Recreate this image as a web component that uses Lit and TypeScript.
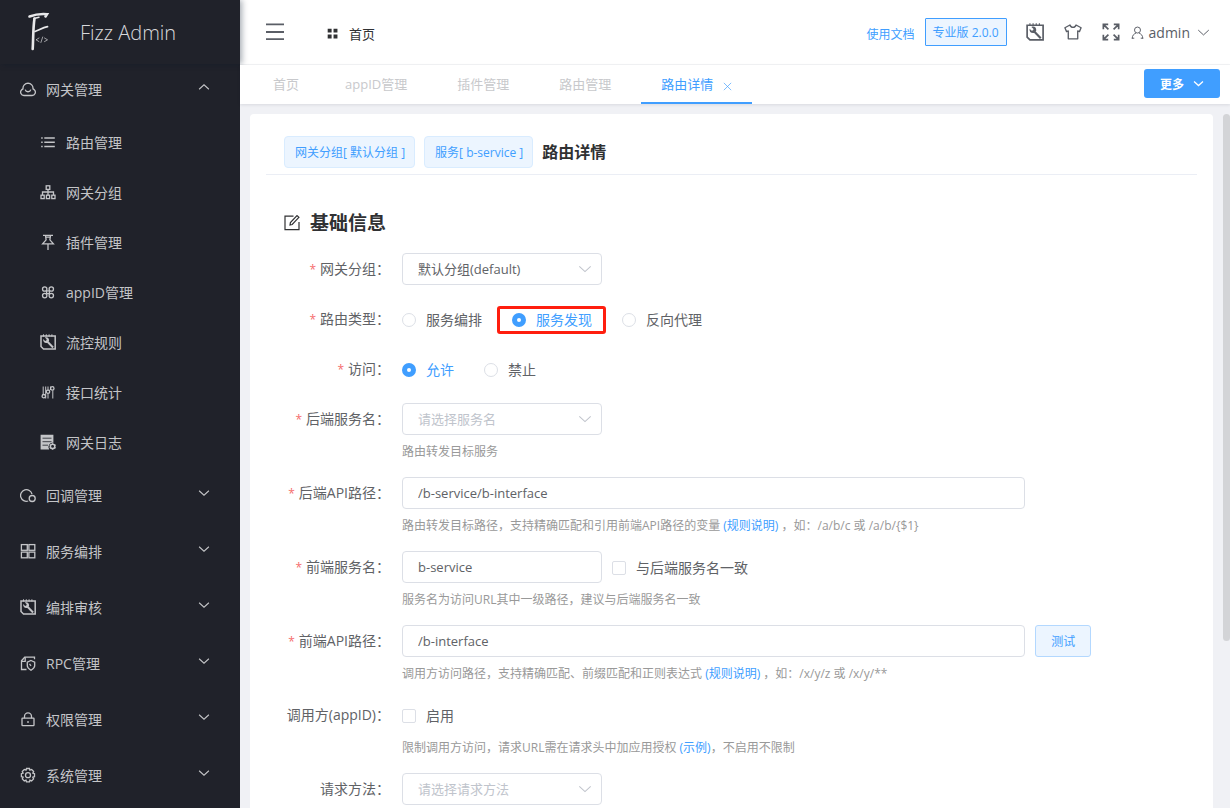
import { LitElement, html, css, svg, nothing, type SVGTemplateResult, type TemplateResult } from "lit";
import { customElement, property, state } from "lit/decorators.js";
import { classMap } from "lit/directives/class-map.js";

const ICONS: Record<string, SVGTemplateResult> = {
  wrench: svg`
    <path d="M1 2h14.200v13h-11.700l-2.500-2.500z" stroke-width="1.500"/>
    <path d="M3.500 .3v2.200M6.300 .3v2.200M9.100 .3v2.200M11.900 .3v2.200" stroke-width="1"/>
    <path d="M7.300 7.500l5.800 6" stroke-width="1.900"/>
    <path d="M4.800 3.500l1.900 1.800-.4 1.200-1.200.4-1.900-1.900c-.4 2.400 1.200 4.400 3.900 3.900l2-2.100c.3-2.700-1.800-4.300-4.300-3.300z" fill="currentColor" stroke="none"/>`,
  cloud: svg`
    <path d="M3.900 14.500h8.200a3.300 3.300 0 0 0 2.400-5.500 4 4 0 0 0-1.500-1.200A5.100 5.100 0 0 0 8 2.200a5.100 5.100 0 0 0-5 5.600 4 4 0 0 0-1.500 1.200 3.300 3.300 0 0 0 2.400 5.500z"/>
    <path d="M5.200 8.600a2.900 2.900 0 0 0 5.600 0"/>`,
  list: svg`
    <path d="M4.300 4h10.500M4.300 8.200h10.500M4.300 12.400h10.500" stroke-width="1.500"/>
    <path d="M1.200 4h1.500M1.200 8.200h1.500M1.200 12.400h1.500" stroke-width="1.500"/>`,
  tree: svg`
    <rect x="6.200" y="1.800" width="3.600" height="3.600"/>
    <path d="M8 5.500v5.500M2.500 11v-3h11v3"/>
    <rect x="1" y="11.200" width="3.200" height="3.400"/><rect x="6.400" y="11.200" width="3.200" height="3.400"/><rect x="11.800" y="11.200" width="3.200" height="3.400"/>`,
  pin: svg`<path d="M3 1.400h10M5.500 1.400l.6 4.500-3.500 4h10.800L9.900 5.900l.6-4.500M8 9.900v6M6 3.200h4"/>`,
  clover: svg`
    <path d="M6.600 6.900h2.800v2.800h-2.800z"/>
    <circle cx="4.700" cy="5" r="2.200"/><circle cx="11.300" cy="5" r="2.200"/>
    <circle cx="4.700" cy="11.600" r="2.200"/><circle cx="11.300" cy="11.600" r="2.200"/>`,
  sliders: svg`
    <path d="M3.200 2.500v7.500M8 2.500v3M8 9.500v5M12.800 6.500v8M5.700 2.500v12M10.500 2.500v3.500" stroke-width="1"/>
    <circle cx="3.800" cy="12.200" r="1.700"/><circle cx="8" cy="7.700" r="1.700"/><circle cx="12.300" cy="4.400" r="1.700"/>`,
  log: svg`
    <path d="M.6 .8h12.800v8a4.200 4.200 0 0 0-4.200 6.600h-8.600z" fill="currentColor" stroke="none"/>
    <path d="M2.500 4.200h9M2.500 7.700h9M2.500 11.200h5.500" stroke="#20222a" stroke-width=".8"/>
    <circle cx="12.600" cy="12.400" r="2.200" stroke-width="1.500"/>
    <path d="M12.600 9.200v1M12.600 14.600v1.200M9.700 10.800l1 .6M14.600 13.500l1 .6M9.700 14.100l1-.6M14.600 11.400l1-.6"/>`,
  circles: svg`
    <path d="M8.200 14A5.800 5.800 0 1 1 12 7.100"/>
    <circle cx="12.200" cy="11.500" r="3"/>`,
  grid: svg`
    <rect x="1.400" y="1.600" width="5.900" height="5.700"/><rect x="8.900" y="1.600" width="5.900" height="5.700"/>
    <rect x="1.400" y="9.100" width="5.900" height="5.700"/><rect x="8.900" y="9.100" width="5.900" height="5.700"/>`,
  rpc: svg`
    <path d="M6.500 14.500h-5V5.800L4.700 2.200h9.800v2"/>
    <path d="M1.500 6.300h3.700V2.300"/>
    <path d="M11 5.500l3.700 1.600v3.700c0 1.800-1.700 3.300-3.700 4.500-2-1.200-3.700-2.700-3.700-4.500V7.100z"/>
    <path d="M9.500 8.900l1.500 1.900"/>`,
  lock: svg`
    <rect x="2" y="7.200" width="12" height="7.500" rx=".6"/>
    <path d="M4.500 7.200V5.400a3.500 3.500 0 0 1 7 0V7.200M8 10v2"/>`,
  gear: svg`
    <path d="M6.500 1.500h3l.4 1.700 1.700-.7 2 2-.8 1.600 1.700.6v3l-1.700.5.8 1.700-2 2-1.700-.8-.4 1.800h-3l-.5-1.800-1.700.8-2-2 .8-1.700-1.700-.5v-3l1.700-.6-.8-1.600 2-2 1.700.7z"/>
    <circle cx="8" cy="8.200" r="2.500"/>`,
  shirt: svg`<path d="M5.300 1.800L.8 4.200l1.500 3.500 1.500-.6v7h8.400v-7l1.500.6 1.500-3.500-4.500-2.400a2.800 2.800 0 0 1-5.400 0z" stroke-linejoin="round"/>`,
  expand: svg`<path d="M1.200 5.500V1.200h4.300M1.200 1.200l4.500 4.500M10.500 1.200h4.300v4.300M14.800 1.200l-4.500 4.500M1.200 10.500v4.300h4.300M1.200 14.800l4.500-4.500M14.800 10.500v4.300h-4.300M14.800 14.800l-4.500-4.500" stroke-width="1.500"/>`,
  user: svg`
    <circle cx="8" cy="5" r="3.700"/>
    <path d="M1.500 15.500c0-3.700 1.700-5.600 4.500-6.600M14.500 15.500c0-3.700-1.700-5.600-4.500-6.600M1 15h3M12 15h3"/>`,
  menu: svg`<path d="M0 1.300h16M0 8h16M0 14.400h16" stroke-width="1.600"/>`,
  tiles: svg`<path d="M1 1h5.700v5.700H1zM9.500 1h5.700v5.700H9.500zM1 9.500h5.700v5.700H1zM9.500 9.500h5.700v5.700H9.500z" fill="currentColor" stroke="none"/>`,
  edit: svg`
    <path d="M9.500 1.200H1v13.500h14V7"/>
    <path d="M6 10l.4-2.400L13 .6l1.900 1.700-6.700 7.200z"/>`,
  down: svg`<path d="M1.500 5l6.500 6 6.500-6"/>`,
  up: svg`<path d="M1.500 11L8 5l6.500 6"/>`,
  close: svg`<path d="M1.500 1.500l13 13M14.500 1.500l-13 13"/>`,
};

const icon = (name: string, cls = ""): TemplateResult => html`
  <svg class="icon ${cls}" viewBox="0 0 16 16" fill="none" stroke="currentColor" aria-hidden="true">${ICONS[name]}</svg>`;

const shared = css`
  :host {
    font-family: "Open Sans", "Noto Sans CJK SC", sans-serif;
    font-size: 14px;
  }
  *,
  *::before,
  *::after {
    box-sizing: border-box;
  }
  a {
    color: #409eff;
    text-decoration: none;
  }
  button,
  input,
  select {
    font-family: inherit;
  }
  button {
    cursor: pointer;
  }
  .icon {
    display: block;
    flex: none;
    width: 16px;
    height: 16px;
    stroke-width: 1.2;
  }
`;

interface MenuItem {
  icon: string;
  label: string;
  children?: MenuItem[];
}

const MENU: MenuItem[] = [
  {
    icon: "cloud",
    label: "网关管理",
    children: [
      { icon: "list", label: "路由管理" },
      { icon: "tree", label: "网关分组" },
      { icon: "pin", label: "插件管理" },
      { icon: "clover", label: "appID管理" },
      { icon: "wrench", label: "流控规则" },
      { icon: "sliders", label: "接口统计" },
      { icon: "log", label: "网关日志" },
    ],
  },
  { icon: "circles", label: "回调管理" },
  { icon: "grid", label: "服务编排" },
  { icon: "wrench", label: "编排审核" },
  { icon: "rpc", label: "RPC管理" },
  { icon: "lock", label: "权限管理" },
  { icon: "gear", label: "系统管理" },
];

@customElement("side-menu")
export class SideMenu extends LitElement {
  @state() private open = "网关管理";

  static styles = [
    shared,
    css`
      :host {
        display: block;
        background: #20222a;
        color: #c4c5c8;
      }
      .icon {
        stroke-width: 1.3;
      }
      .brand {
        position: relative;
        display: flex;
        align-items: center;
        gap: 29px;
        height: 64px;
        padding: 0 27px;
        background: #20222a;
        box-shadow: 2px 0 6px rgba(0, 21, 41, 0.35);
        font-size: 20px;
        font-weight: 300;
        color: #d8d9dc;
      }
      .logo {
        width: 24px;
        height: 40px;
      }
      .mark {
        fill: none;
        stroke: #e8e8ea;
        stroke-linecap: round;
      }
      .menu {
        margin-top: -3px;
      }
      .group {
        display: flex;
        align-items: center;
        gap: 10px;
        width: 100%;
        height: 56px;
        padding: 0 30px 0 20px;
        border: 0;
        background: none;
        color: inherit;
        font-size: 14px;
        text-align: left;
      }
      .name {
        flex: 1;
      }
      .arrow {
        width: 12px;
        height: 12px;
        margin-bottom: 4px;
        stroke-width: 1.4;
      }
      .sub {
        display: flex;
        align-items: center;
        gap: 10px;
        height: 50px;
        padding-left: 40px;
        color: inherit;
      }
    `,
  ];

  render() {
    return html`
      <div class="brand">
        <svg class="logo" viewBox="0 0 24 40" aria-hidden="true">
          <g class="mark">
            <path d="M2.500 4.500C8 2.500 14 1.700 20 2.200L18.500 4.500" stroke-width="2.600" />
            <path d="M7.500 6.500C6 16 6.300 27 5.700 37" stroke-width="2.600" />
            <path d="M7 6.500L12 5.300" stroke-width="1.500" />
            <path d="M8 19.500C12 18 16 15.500 20.500 14.700" stroke-width="1.800" />
            <path d="M12 26l-3 1.800 3 1.800M17.500 26l3 1.800-3 1.800M15.700 25l-1.800 5.500" stroke-width=".9" opacity=".7" />
          </g>
        </svg>
        Fizz Admin
      </div>
      <nav class="menu">
        ${MENU.map((item) => {
          const open = this.open === item.label;
          return html`
            <button
              class="group"
              type="button"
              aria-expanded=${open}
              @click=${() => (this.open = open ? "" : item.label)}
            >
              ${icon(item.icon)}<span class="name">${item.label}</span>${icon(open ? "up" : "down", "arrow")}
            </button>
            ${open
              ? item.children?.map((c) => html`<a class="sub" href="#">${icon(c.icon)}<span>${c.label}</span></a>`)
              : nothing}
          `;
        })}
      </nav>
    `;
  }
}

@customElement("top-bar")
export class TopBar extends LitElement {
  static styles = [
    shared,
    css`
      :host {
        display: flex;
        align-items: center;
        height: 65px;
        padding: 0 20px 0 26px;
        border-bottom: 1px solid #f3f4f6;
        background: #fff;
        color: #5a5e66;
      }
      .icon-button {
        display: flex;
        padding: 0;
        border: 0;
        background: none;
        color: inherit;
      }
      .burger {
        width: 18px;
        height: 18px;
      }
      .crumb {
        display: flex;
        align-items: center;
        gap: 11px;
        margin: 2px auto 0 43px;
        color: #303133;
        font-size: 13px;
      }
      .tiles {
        width: 11px;
        height: 11px;
      }
      .docs {
        margin: 3px 10px 0 0;
        font-size: 12px;
      }
      .edition {
        height: 28px;
        margin-right: 19px;
        padding: 0 7px;
        border: 1px solid #409eff;
        border-radius: 1px;
        background: #ecf5ff;
        color: #409eff;
        font-size: 12px;
      }
      .tools {
        display: flex;
        align-items: center;
        gap: 20px;
        margin-right: 11px;
      }
      .tool {
        width: 18px;
        height: 18px;
      }
      .account {
        gap: 5px;
        align-items: center;
        font-size: 14px;
      }
      .person {
        width: 13px;
        height: 13px;
      }
      .chevron {
        width: 13px;
        height: 13px;
        margin-left: 2px;
      }
    `,
  ];

  render() {
    return html`
      <button class="icon-button" type="button" aria-label="菜单">${icon("menu", "burger")}</button>
      <a class="crumb" href="#">${icon("tiles", "tiles")}<span>首页</span></a>
      <a class="docs" href="#">使用文档</a>
      <button class="edition" type="button">专业版 2.0.0</button>
      <div class="tools">
        <button class="icon-button" type="button" aria-label="工具">${icon("wrench", "tool")}</button>
        <button class="icon-button" type="button" aria-label="主题">${icon("shirt", "tool")}</button>
        <button class="icon-button" type="button" aria-label="全屏">${icon("expand", "tool")}</button>
      </div>
      <button class="icon-button account" type="button">
        ${icon("user", "person")}<span>admin</span>${icon("down", "chevron")}
      </button>
    `;
  }
}

@customElement("tab-strip")
export class TabStrip extends LitElement {
  @property({ type: Array }) tabs = ["首页", "appID管理", "插件管理", "路由管理", "路由详情"];
  @property() active = "路由详情";

  static styles = [
    shared,
    css`
      :host {
        position: relative;
        z-index: 2;
        display: flex;
        justify-content: space-between;
        height: 39px;
        padding: 0 10px 0 13px;
        background: #fff;
        box-shadow: 0 1px 3px rgba(0, 21, 41, 0.1);
      }
      .tabs {
        display: flex;
      }
      .tab {
        display: flex;
        align-items: center;
        gap: 10px;
        padding: 0 30px 0 20px;
        border-bottom: 2px solid transparent;
        font-size: 13px;
      }
      .home {
        padding-right: 26px;
      }
      .link {
        color: #c8c9cc;
      }
      .active {
        padding-right: 20px;
        border-bottom-color: #409eff;
      }
      .active .link {
        color: #409eff;
      }
      .close {
        padding: 6px 0 0;
        border: 0;
        background: none;
        color: #409eff;
      }
      .cross {
        width: 9px;
        height: 9px;
      }
      .more {
        display: flex;
        align-items: center;
        gap: 9px;
        height: 29px;
        margin-top: 4px;
        padding: 0 16px;
        border: 0;
        border-radius: 3px;
        background: #409eff;
        color: #fff;
        font-size: 12px;
        font-weight: 700;
      }
      .arrow {
        width: 11px;
        height: 11px;
        stroke-width: 1.8;
      }
    `,
  ];

  render() {
    return html`
      <nav class="tabs">
        ${this.tabs.map((t, i) => {
          const active = t === this.active;
          return html`<div class=${classMap({ tab: true, home: i === 0, active })}>
            <a class="link" href="#">${t}</a>${active
              ? html`<button class="close" type="button" aria-label="关闭">${icon("close", "cross")}</button>`
              : nothing}
          </div>`;
        })}
      </nav>
      <button class="more" type="button">更多${icon("down", "arrow")}</button>
    `;
  }
}

@customElement("route-form")
export class RouteForm extends LitElement {
  @state() private kind = "服务发现";
  @state() private access = "允许";

  static styles = [
    shared,
    css`
      :host {
        display: block;
        border-radius: 4px 4px 0 0;
        padding: 0 16px;
        background: #fff;
        color: #606266;
      }
      .head {
        display: flex;
        align-items: center;
        gap: 9px;
        padding: 22px 18px 6px;
        border-bottom: 1px solid #ebeef5;
      }
      .tag {
        height: 32px;
        padding: 1px 9px 0 10px;
        border: 1px solid #d9ecff;
        border-radius: 4px;
        background: #ecf5ff;
        color: #409eff;
        font-size: 12px;
        line-height: 30px;
      }
      .title {
        margin: 0;
        color: #303133;
        font-size: 16px;
        font-weight: 700;
        line-height: 30px;
      }
      .section {
        padding: 32px 16px 24px 18px;
      }
      .subtitle {
        display: flex;
        align-items: center;
        gap: 10px;
        margin: 0 0 14px;
        color: #303133;
        font-size: 19px;
        font-weight: 700;
        line-height: 32px;
      }
      .row {
        display: grid;
        grid-template-columns: 106px minmax(0, 1fr);
        column-gap: 12px;
        margin-bottom: 18px;
      }
      .label {
        text-align: right;
        line-height: 32px;
        white-space: nowrap;
      }
      .required::before {
        content: "*";
        margin-right: 4px;
        color: #f56c6c;
        font-size: 12px;
        line-height: 12px;
      }
      .line {
        display: flex;
        align-items: center;
        gap: 10px;
        height: 32px;
      }
      .help {
        margin: 0;
        padding-top: 10px;
        color: #999;
        font-size: 12px;
        line-height: 14px;
      }
      .box {
        width: 100%;
        height: 32px;
        margin: 0;
        padding: 0 15px;
        border: 1px solid #dcdfe6;
        border-radius: 4px;
        outline: 0;
        background: #fff;
        color: #606266;
        font-size: 13px;
        appearance: none;
      }
      .empty {
        color: #c0c4cc;
      }
      .short {
        position: relative;
        flex: none;
        width: 200px;
      }
      .long {
        flex: none;
        width: 80%;
      }
      .caret {
        position: absolute;
        top: 9px;
        right: 10px;
        width: 14px;
        height: 14px;
        color: #c0c4cc;
        pointer-events: none;
      }
      .options {
        display: flex;
        align-items: center;
        gap: 30px;
        height: 32px;
        padding-top: 2px;
      }
      .option {
        position: relative;
        display: flex;
        align-items: center;
        gap: 10px;
      }
      .chosen {
        color: #409eff;
      }
      .marked::after {
        content: "";
        position: absolute;
        inset: -4px -14px -4px -15px;
        border: 3px solid #ff1e0f;
        border-radius: 3px;
        pointer-events: none;
      }
      .tick {
        flex: none;
        width: 14px;
        height: 14px;
        margin: 0;
        border: 1px solid #dcdfe6;
        border-radius: 2px;
        background: #fff;
        appearance: none;
      }
      .tick:checked {
        border-color: #409eff;
        background: #409eff;
      }
      .round {
        border-radius: 50%;
      }
      .round:checked {
        border-width: 5px;
        background: #fff;
      }
      .option-text {
        line-height: 20px;
      }
      .test {
        width: 56px;
        height: 32px;
        padding: 0;
        border: 1px solid #b3d8ff;
        border-radius: 3px;
        background: #ecf5ff;
        color: #409eff;
        font-size: 12px;
      }
    `,
  ];

  private label(text: string, forId: string, required = true) {
    return forId
      ? html`<label class=${classMap({ label: true, required })} for=${forId}>${text}：</label>`
      : html`<span class=${classMap({ label: true, required })}>${text}：</span>`;
  }

  private select(id: string, text: string, empty = false) {
    return html`<div class="short">
      <select id=${id} class=${classMap({ box: true, empty })}>
        <option>${text}</option>
      </select>
      ${icon("down", "caret")}
    </div>`;
  }

  private radios(name: string, title: string, values: string[], current: string, pick: (v: string) => void, marked = "") {
    return html`<div class="options" role="radiogroup" aria-label=${title}>
      ${values.map(
        (v) => html`<label class=${classMap({ option: true, chosen: v === current, marked: v === marked })}>
          <input
            class="tick round"
            type="radio"
            name=${name}
            .checked=${v === current}
            @change=${() => pick(v)}
          /><span class="option-text">${v}</span>
        </label>`,
      )}
    </div>`;
  }

  private checkbox(text: string) {
    return html`<div class="options">
      <label class="option"><input class="tick" type="checkbox" /><span class="option-text">${text}</span></label>
    </div>`;
  }

  render() {
    return html`
      <header class="head">
        <span class="tag">网关分组[ 默认分组 ]</span>
        <span class="tag">服务[ b-service ]</span>
        <h1 class="title">路由详情</h1>
      </header>
      <form class="section">
        <h2 class="subtitle">${icon("edit")}基础信息</h2>
        <div class="row">
          ${this.label("网关分组", "group")}
          <div>${this.select("group", "默认分组(default)")}</div>
        </div>
        <div class="row">
          ${this.label("路由类型", "")}
          ${this.radios("kind", "路由类型", ["服务编排", "服务发现", "反向代理"], this.kind, (v) => (this.kind = v), "服务发现")}
        </div>
        <div class="row">
          ${this.label("访问", "")}
          ${this.radios("access", "访问", ["允许", "禁止"], this.access, (v) => (this.access = v))}
        </div>
        <div class="row">
          ${this.label("后端服务名", "backend")}
          <div>
            ${this.select("backend", "请选择服务名", true)}
            <p class="help">路由转发目标服务</p>
          </div>
        </div>
        <div class="row">
          ${this.label("后端API路径", "backend-path")}
          <div>
            <div class="line"><div class="long"><input id="backend-path" class="box" value="/b-service/b-interface" /></div></div>
            <p class="help">
              路由转发目标路径，支持精确匹配和引用前端API路径的变量 <a href="#">(规则说明)</a> ，如：/a/b/c 或 /a/b/{$1}
            </p>
          </div>
        </div>
        <div class="row">
          ${this.label("前端服务名", "front")}
          <div>
            <div class="line">
              <div class="short"><input id="front" class="box" value="b-service" /></div>
              ${this.checkbox("与后端服务名一致")}
            </div>
            <p class="help">服务名为访问URL其中一级路径，建议与后端服务名一致</p>
          </div>
        </div>
        <div class="row">
          ${this.label("前端API路径", "front-path")}
          <div>
            <div class="line">
              <div class="long"><input id="front-path" class="box" value="/b-interface" /></div>
              <button class="test" type="button">测试</button>
            </div>
            <p class="help">
              调用方访问路径，支持精确匹配、前缀匹配和正则表达式 <a href="#">(规则说明)</a> ，如：/x/y/z 或 /x/y/**
            </p>
          </div>
        </div>
        <div class="row">
          ${this.label("调用方(appID)", "", false)}
          <div>
            ${this.checkbox("启用")}
            <p class="help">限制调用方访问，请求URL需在请求头中加应用授权 <a href="#">(示例)</a>，不启用不限制</p>
          </div>
        </div>
        <div class="row">
          ${this.label("请求方法", "method", false)}
          <div>${this.select("method", "请选择请求方法", true)}</div>
        </div>
      </form>
    `;
  }
}

@customElement("app-root")
export class AppRoot extends LitElement {
  static styles = [
    shared,
    css`
      :host {
        display: grid;
        grid-template-columns: 240px minmax(0, 1fr);
        height: 100vh;
        overflow: hidden;
        background: #f0f1f5;
      }
      .side {
        position: relative;
        z-index: 1;
        min-height: 0;
      }
      .main {
        display: flex;
        flex-direction: column;
        min-height: 0;
      }
      .view {
        position: relative;
        flex: 1;
        min-height: 0;
        margin-top: 10px;
        padding: 0 17px 0 10px;
        overflow: hidden;
      }
      .thumb {
        position: absolute;
        top: 0;
        right: 0;
        width: 7px;
        height: 76%;
        border-radius: 4px;
        background: #d3d4d7;
      }
    `,
  ];

  render() {
    return html`
      <side-menu class="side"></side-menu>
      <div class="main">
        <top-bar></top-bar>
        <tab-strip></tab-strip>
        <main class="view">
          <route-form></route-form>
          <div class="thumb"></div>
        </main>
      </div>
    `;
  }
}
